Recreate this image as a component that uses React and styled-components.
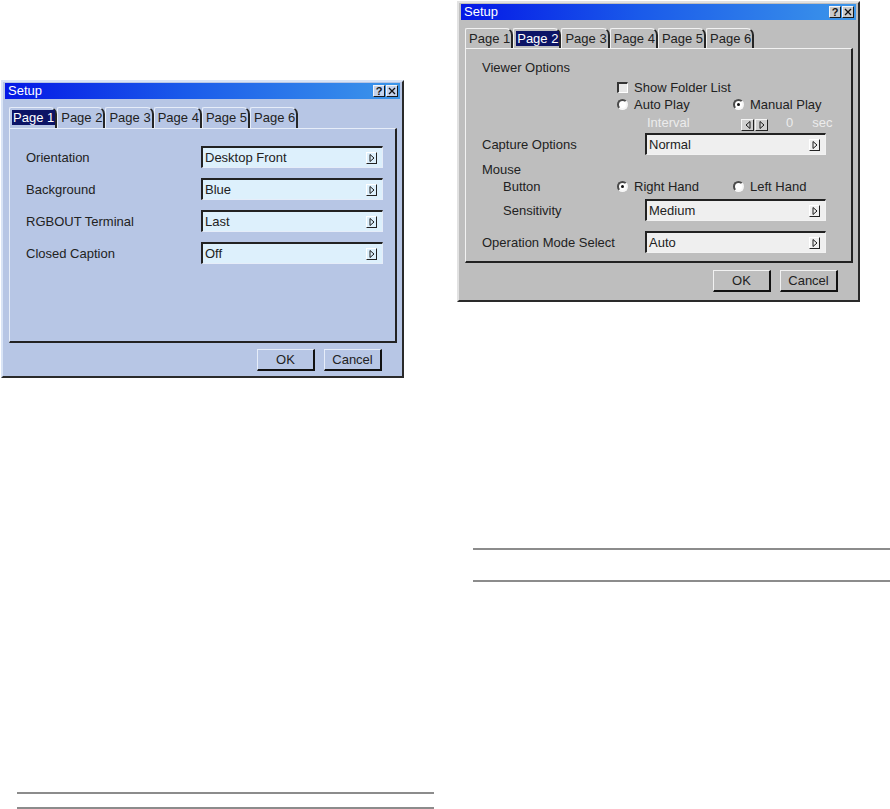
import React from "react";
import styled, { createGlobalStyle } from "styled-components";

const tones = {
  blue: {
    bg: "#b7c6e5",
    light: "#e6edf9",
    edge: "#d9e4f6",
    field: "#ddf0fc",
    key: "#c4d2ec",
  },
  gray: {
    bg: "#bebebe",
    light: "#f2f2f2",
    edge: "#e2e2e2",
    field: "#efefef",
    key: "#cacaca",
  },
};

const GlobalStyle = createGlobalStyle`
  body {
    margin: 0;
    background: #ffffff;
    font-family: "Liberation Sans", Arial, sans-serif;
    font-size: 13px;
    color: #222222;
  }
`;

const Page = styled.div`
  display: grid;
  grid-template-columns: 456px 434px;
  width: 890px;
  height: 809px;
  overflow: hidden;
`;

const Column = styled.div`
  display: flex;
  flex-direction: column;
  padding-top: ${(p) => p.$top}px;
`;

const Window = styled.div`
  width: 403px;
  box-sizing: border-box;
  margin-left: 1px;
  background: ${(p) => p.$t.bg};
  border: 2px solid;
  border-color: ${(p) => p.$t.edge} #2a2a2a #2a2a2a ${(p) => p.$t.edge};
  padding: 1px 2px 0 2px;
`;

const TitleBar = styled.div`
  height: 16px;
  display: flex;
  align-items: center;
  justify-content: space-between;
  padding: 0 2px 0 3px;
  background: linear-gradient(90deg, #0418e6 0%, #1a5aea 45%, #3c96ea 100%);
`;

const Title = styled.span`
  color: #ffffff;
  line-height: 16px;
`;

const TitleKeys = styled.div`
  display: flex;
  gap: 1px;
`;

const TitleKey = styled.span`
  width: 12px;
  height: 12px;
  box-sizing: border-box;
  display: flex;
  align-items: center;
  justify-content: center;
  background: ${(p) => p.$t.key};
  border: 1px solid;
  border-color: #f4f4f4 #1a1a1a #1a1a1a #f4f4f4;
  font-weight: bold;
  font-size: 11px;
  line-height: 10px;
  color: #111;
`;

const Body = styled.div`
  padding: 8px 3px ${(p) => p.$bottom}px 4px;
`;

const Tabs = styled.div`
  display: flex;
  height: ${(p) => p.$h}px;
`;

const Tab = styled.div`
  flex: 0 0 46.67px;
  box-sizing: border-box;
  border-top: 1px solid ${(p) => p.$t.light};
  border-left: 1px solid ${(p) => p.$t.light};
  border-right: 2px solid #262626;
  border-top-left-radius: 2px;
  border-top-right-radius: 7px;
  padding: 2px 0 0 2px;
  line-height: 15px;
  white-space: nowrap;
`;

const TabText = styled.span`
  display: inline-block;
  padding: 0 1px;
  background: ${(p) => (p.$active ? "#0c1466" : "transparent")};
  color: ${(p) => (p.$active ? "#ffffff" : "#222222")};
`;

const Panel = styled.div`
  height: 215px;
  box-sizing: border-box;
  border-top: 1px solid ${(p) => p.$t.light};
  border-left: 1px solid ${(p) => p.$t.light};
  border-right: 2px solid #222;
  border-bottom: 2px solid #222;
  padding: ${(p) => p.$pad};
  display: flex;
  flex-direction: column;
  gap: ${(p) => p.$gap || 0}px;
`;

const Row = styled.div`
  display: flex;
  align-items: center;
  height: ${(p) => p.$h}px;
  margin-top: ${(p) => p.$mt || 0}px;
`;

const Label = styled.span`
  flex: 0 0 ${(p) => p.$w}px;
  box-sizing: border-box;
  padding-left: ${(p) => p.$indent || 0}px;
  white-space: nowrap;
`;

const Select = styled.div`
  width: ${(p) => p.$w}px;
  height: 22px;
  box-sizing: border-box;
  display: flex;
  align-items: center;
  justify-content: space-between;
  padding: 0 5px 0 2px;
  background: ${(p) => p.$t.field};
  border-top: 2px solid #222;
  border-left: 2px solid #222;
  border-right: 1px solid ${(p) => p.$t.light};
  border-bottom: 1px solid ${(p) => p.$t.light};
  white-space: nowrap;
`;

const ArrowKey = styled.span`
  width: 11px;
  height: 12px;
  box-sizing: border-box;
  display: flex;
  align-items: center;
  justify-content: center;
  border: 1px solid;
  border-color: #ffffff #222 #222 #ffffff;
`;

const Option = styled.span`
  flex: 0 0 ${(p) => p.$w || 116}px;
  display: flex;
  align-items: center;
  gap: 6px;
  white-space: nowrap;
`;

const Radio = styled.span`
  position: relative;
  width: 11px;
  height: 11px;
  box-sizing: border-box;
  border-radius: 50%;
  background: #ffffff;
  border: 2px solid;
  border-color: #4a4a4a #f6f6f6 #f6f6f6 #4a4a4a;

  &::after {
    content: "";
    display: ${(p) => (p.$on ? "block" : "none")};
    position: absolute;
    left: 50%;
    top: 50%;
    width: 3px;
    height: 3px;
    margin: -1.5px 0 0 -1.5px;
    border-radius: 50%;
    background: #111;
  }
`;

const Check = styled.span`
  width: 11px;
  height: 11px;
  box-sizing: border-box;
  background: #e8e8e8;
  border-top: 2px solid #333;
  border-left: 2px solid #333;
  border-right: 1px solid #fff;
  border-bottom: 1px solid #fff;
`;

const Muted = styled.span`
  color: #ececec;
  margin-left: ${(p) => p.$ml || 0}px;
  flex: 0 0 ${(p) => (p.$w ? `${p.$w}px` : "auto")};
`;

const Spinner = styled.div`
  display: flex;
  gap: 1px;
  margin-top: 5px;
`;

const SpinKey = styled.span`
  width: 13px;
  height: 12px;
  box-sizing: border-box;
  display: flex;
  align-items: center;
  justify-content: center;
  background: #d0d0d0;
  border: 1px solid;
  border-color: #f6f6f6 #222 #222 #f6f6f6;
`;

const Footer = styled.div`
  display: flex;
  justify-content: flex-end;
  gap: 9px;
  padding-right: 15px;
  margin-top: ${(p) => p.$mt}px;
`;

const Button = styled.div`
  width: 58px;
  height: 22px;
  box-sizing: border-box;
  display: flex;
  align-items: center;
  justify-content: center;
  background: ${(p) => p.$t.bg};
  border-top: 1px solid ${(p) => p.$t.light};
  border-left: 1px solid ${(p) => p.$t.light};
  border-right: 2px solid #111;
  border-bottom: 2px solid #111;
`;

const Rules = styled.div`
  display: flex;
  flex-direction: column;
  gap: ${(p) => p.$gap}px;
  margin: ${(p) => p.$mt}px 0 0 17px;
  width: 417px;
`;

const Rule = styled.div`
  height: 2px;
  background: #8c8c8c;
`;

function Tri({ left }) {
  return (
    <svg width="6" height="8" viewBox="0 0 6 8">
      <polygon
        points={left ? "5,0.5 1,4 5,7.5" : "1,0.5 5,4 1,7.5"}
        fill="none"
        stroke="#1a1a1a"
        strokeWidth="1"
      />
    </svg>
  );
}

function Dropdown({ t, w, value }) {
  return (
    <Select $t={t} $w={w}>
      <span>{value}</span>
      <ArrowKey>
        <Tri />
      </ArrowKey>
    </Select>
  );
}

function SetupWindow({ t, selected, bottom, footerTop, tabH, children, pad, gap }) {
  return (
    <Window $t={t}>
      <TitleBar>
        <Title>Setup</Title>
        <TitleKeys>
          <TitleKey $t={t}>?</TitleKey>
          <TitleKey $t={t}>
            <svg width="8" height="8" viewBox="0 0 8 8">
              <path d="M1 1 L7 7 M7 1 L1 7" stroke="#111" strokeWidth="1.3" />
            </svg>
          </TitleKey>
        </TitleKeys>
      </TitleBar>
      <Body $bottom={bottom}>
        <Tabs $h={tabH}>
          {[1, 2, 3, 4, 5, 6].map((n) => (
            <Tab key={n} $t={t}>
              <TabText $active={n === selected}>Page {n}</TabText>
            </Tab>
          ))}
        </Tabs>
        <Panel $t={t} $pad={pad} $gap={gap}>
          {children}
        </Panel>
        <Footer $mt={footerTop}>
          <Button $t={t}>OK</Button>
          <Button $t={t}>Cancel</Button>
        </Footer>
      </Body>
    </Window>
  );
}

const pageOne = [
  ["Orientation", "Desktop Front"],
  ["Background", "Blue"],
  ["RGBOUT Terminal", "Last"],
  ["Closed Caption", "Off"],
];

export default function App() {
  const b = tones.blue;
  const g = tones.gray;
  return (
    <Page>
      <GlobalStyle />
      <Column $top={80}>
        <SetupWindow t={b} selected={1} bottom={5} footerTop={6} tabH={21} pad="17px 12px 0 16px" gap={10}>
          {pageOne.map(([label, value]) => (
            <Row key={label} $h={22}>
              <Label $w={175}>{label}</Label>
              <Dropdown t={b} w={182} value={value} />
            </Row>
          ))}
        </SetupWindow>
        <Rules $mt={414} $gap={13}>
          <Rule />
          <Rule />
        </Rules>
      </Column>
      <Column $top={1}>
        <SetupWindow t={g} selected={2} bottom={8} footerTop={7} tabH={20} pad="8px 4px 0 16px">
          <Row $h={21}>
            <Label $w={135}>Viewer Options</Label>
          </Row>
          <Row $h={18}>
            <Label $w={135} />
            <Option $w={160}>
              <Check />
              Show Folder List
            </Option>
          </Row>
          <Row $h={16}>
            <Label $w={135} />
            <Option>
              <Radio />
              Auto Play
            </Option>
            <Option>
              <Radio $on />
              Manual Play
            </Option>
          </Row>
          <Row $h={21}>
            <Label $w={165} />
            <Muted $w={94}>Interval</Muted>
            <Spinner>
              <SpinKey>
                <Tri left />
              </SpinKey>
              <SpinKey>
                <Tri />
              </SpinKey>
            </Spinner>
            <Muted $ml={18}>0</Muted>
            <Muted $ml={19}>sec</Muted>
          </Row>
          <Row $h={22}>
            <Label $w={163}>Capture Options</Label>
            <Dropdown t={g} w={181} value="Normal" />
          </Row>
          <Row $h={20} $mt={4}>
            <Label $w={135}>Mouse</Label>
          </Row>
          <Row $h={14}>
            <Label $w={135} $indent={21}>
              Button
            </Label>
            <Option>
              <Radio $on />
              Right Hand
            </Option>
            <Option>
              <Radio />
              Left Hand
            </Option>
          </Row>
          <Row $h={22} $mt={6}>
            <Label $w={163} $indent={21}>
              Sensitivity
            </Label>
            <Dropdown t={g} w={181} value="Medium" />
          </Row>
          <Row $h={22} $mt={10}>
            <Label $w={163}>Operation Mode Select</Label>
            <Dropdown t={g} w={181} value="Auto" />
          </Row>
        </SetupWindow>
        <Rules $mt={246} $gap={30}>
          <Rule />
          <Rule />
        </Rules>
      </Column>
    </Page>
  );
}
